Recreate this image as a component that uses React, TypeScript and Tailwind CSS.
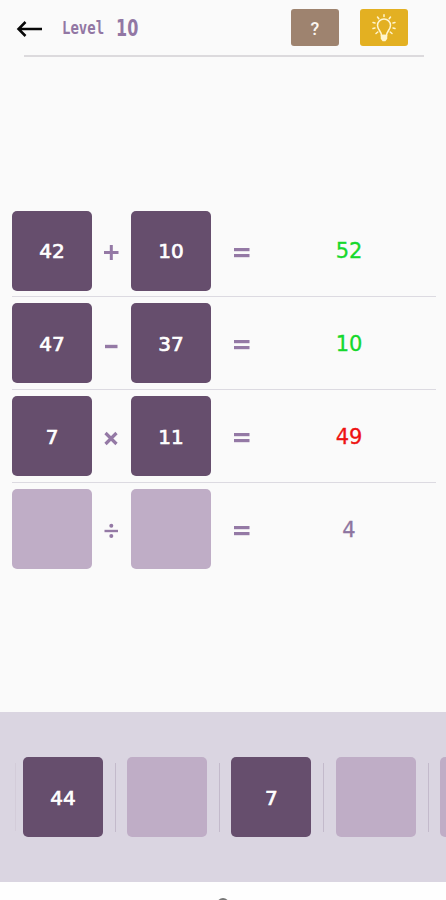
import React from "react";

type Tone = "ok" | "bad" | "idle";

const tones: Record<Tone, string> = {
  ok: "text-[#16d82c]",
  bad: "text-[#ee1212]",
  idle: "text-[#8d74a0]",
};

const rows: { a?: string; op: string; b?: string; result: string; tone: Tone }[] = [
  { a: "42", op: "+", b: "10", result: "52", tone: "ok" },
  { a: "47", op: "-", b: "37", result: "10", tone: "ok" },
  { a: "7", op: "×", b: "11", result: "49", tone: "bad" },
  { op: "÷", result: "4", tone: "idle" },
];

const tray: (string | undefined)[] = ["44", undefined, "7", undefined];

function Tile({ value }: { value?: string }) {
  return (
    <div
      className={`flex h-20 w-20 shrink-0 items-center justify-center rounded-[5px] pt-px text-[20px] leading-none text-white [-webkit-text-stroke:0.7px_white] ${
        value ? "bg-[#664e6d]" : "bg-[#bfadc6]"
      }`}
    >
      {value}
    </div>
  );
}

function Operator({ op }: { op: string }) {
  return (
    <svg className="mt-[3px] mr-px h-5 w-5" viewBox="0 0 20 20" stroke="#9479a5" strokeWidth="3" fill="none" role="img" aria-label={op}>
      {op === "+" && <path d="M3 10.500H17.500M10.300 3V18" />}
      {op === "-" && <path d="M4 11.500H16.500" strokeWidth="3.4" />}
      {op === "×" && <path d="M4.500 5L15.500 16M15.500 5L4.500 16" strokeWidth="3.2" />}
      {op === "÷" && (
        <>
          <path d="M3.500 10H17" strokeWidth="2.4" />
          <circle cx="10.3" cy="4.800" r="2" fill="#9479a5" stroke="none" />
          <circle cx="10.3" cy="15" r="2" fill="#9479a5" stroke="none" />
        </>
      )}
    </svg>
  );
}

export default function App() {
  return (
    <div className="flex h-[900px] w-[446px] flex-col overflow-hidden bg-[#fafafa] font-['DejaVu_Sans',sans-serif]">
      <header className="flex h-[55px] shrink-0 items-center pl-4 text-[#9277a4]">
        <svg className="mt-[3px] h-[18px] w-7" viewBox="0 0 28 18" fill="none" stroke="#080808" strokeWidth="2.5">
          <path d="M26 9H3M9.500 2L2.500 9L9.500 16" />
        </svg>
        <span className="ml-[18px] w-[54px] scale-y-[1.2] font-['DejaVu_Sans_Mono',monospace] text-[14px] leading-none font-bold">Level</span>
        <span className="w-[22px] origin-left scale-x-[0.8] scale-y-[1.12] text-[20px] leading-none font-bold">10</span>
        <button className="ml-[153px] flex h-[37px] w-12 items-center justify-center rounded-[3px] bg-[#9e836f] pt-px font-['Roboto',sans-serif] text-[18px] font-medium text-[#fbf6f0]">
          ?
        </button>
        <button className="ml-[21px] flex h-[37px] w-12 items-center justify-center rounded-[3px] bg-[#e3b022]">
          <svg className="h-7 w-6" viewBox="0 0 24 28" fill="none" stroke="#fff5cf" strokeWidth="1.5" strokeLinecap="round">
            <path d="M9.500 21.500C9.500 17.500 5.500 15.500 5.500 11.500a6.500 6.500 0 0 1 13 0C18.500 15.500 14.500 17.500 14.500 21.500Z" />
            <path d="M9.500 21.500H14.500V24.500L13 26.500H11L9.500 24.500Z" fill="#fff5cf" />
            <path d="M12 0.800V2.500M5.500 3L6.800 4.800M18.500 3L17.200 4.800M1 8.500L3 9M23 8.500L21 9M1 14.500L3 14M23 14.500L21 14M4 19.500L5.800 18M20 19.500L18.200 18" />
          </svg>
        </button>
      </header>
      <div className="ml-6 h-[1.5px] w-[400px] shrink-0 bg-[#dcdadd]" />

      <main className="mt-[154px] ml-3 w-[424px] shrink-0">
        {rows.map((row, i) => (
          <div key={row.op}>
            <div className="flex h-[80px] items-center">
              <Tile value={row.a} />
              <div className="flex w-[39px] justify-center">
                <Operator op={row.op} />
              </div>
              <Tile value={row.b} />
              <svg className="mt-1 ml-[23px] h-3 w-4" viewBox="0 0 16 12" fill="#9479a5" role="img" aria-label="=">
                <rect y="1" width="15.500" height="3.200" />
                <rect y="7" width="15.500" height="3.200" />
              </svg>
              <div className={`ml-[59px] w-20 pt-0.5 text-center text-[21px] leading-none [-webkit-text-stroke:0.3px_currentColor] ${tones[row.tone]}`}>{row.result}</div>
            </div>
            {i < 3 && <div className="mt-[5.3px] mb-[6.3px] h-[1.4px] w-full bg-[#dcdae1]" />}
          </div>
        ))}
      </main>

      <section className="mt-auto flex h-[170px] shrink-0 items-center overflow-hidden bg-[#dad5e1] pl-[15px]">
        <div className="h-[68px] w-px shrink-0 bg-[#d3ccd9]" />
        <div className="w-[7px] shrink-0" />
        {tray.map((value, i) => (
          <React.Fragment key={i}>
            <Tile value={value} />
            <div className="mr-[11.2px] ml-3 h-[69px] w-px shrink-0 bg-[#c3bacb]" />
          </React.Fragment>
        ))}
        <Tile />
      </section>
      <footer className="flex h-[18px] shrink-0 justify-center overflow-hidden bg-[#fefefe] pt-4">
        <div className="h-3 w-3 shrink-0 rounded-full border-2 border-[#777777]" />
      </footer>
    </div>
  );
}
